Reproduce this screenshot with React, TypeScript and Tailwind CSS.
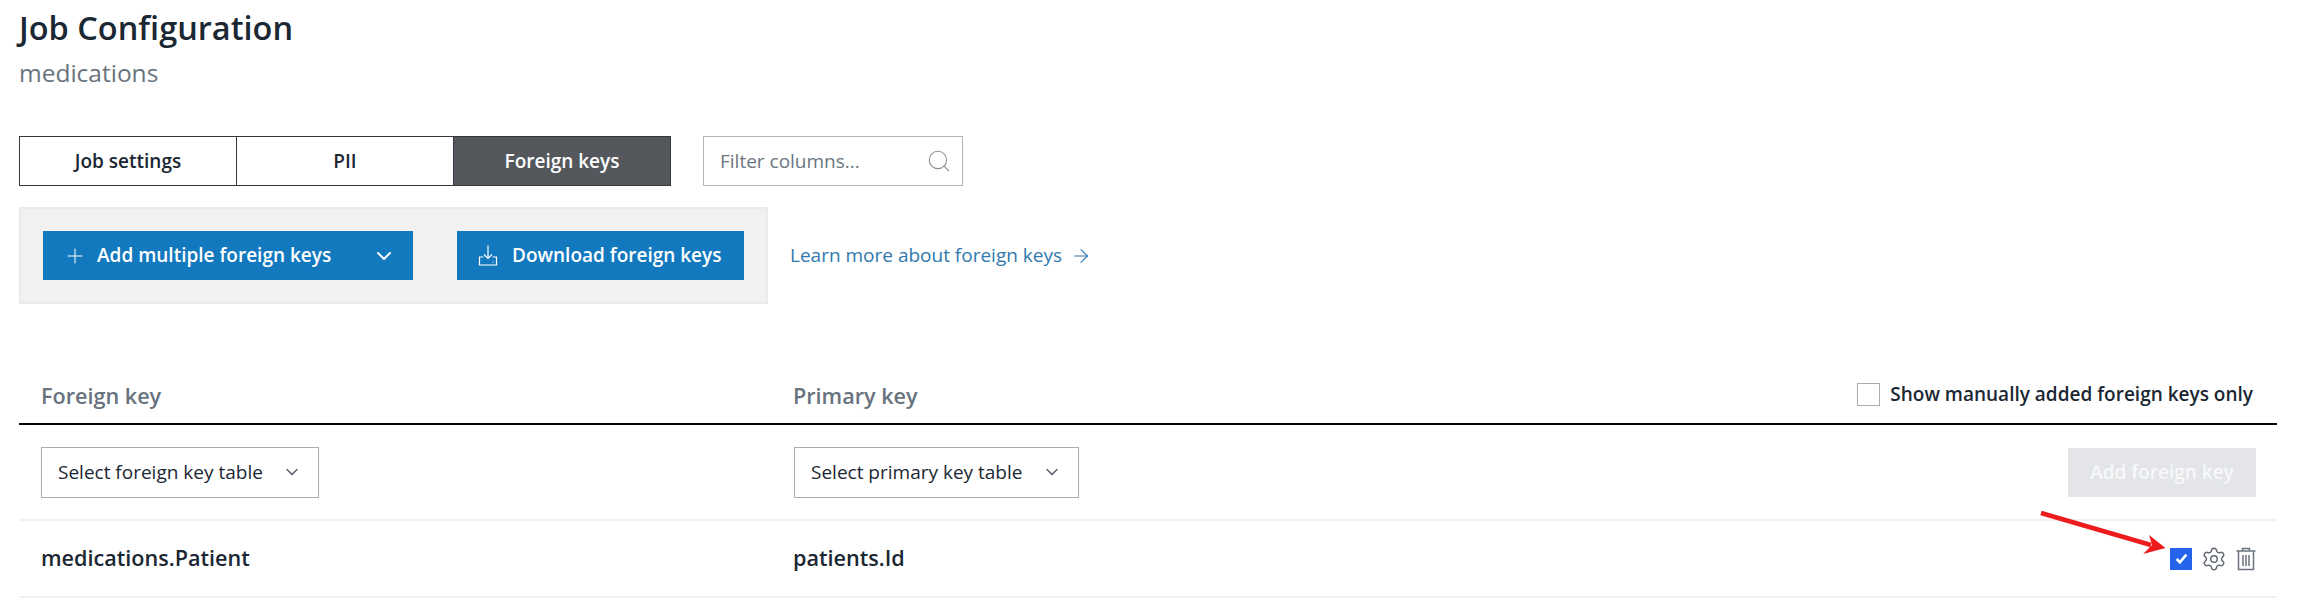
import { ArrowRight, ChevronDown, Plus, Search, Settings } from 'lucide-react';

const TABS = [
  { id: 'job', label: 'Job settings' },
  { id: 'pii', label: 'PII' },
  { id: 'fk', label: 'Foreign keys', active: true },
];

function TrayIcon() {
  return (
    <svg viewBox="0 0 24 24" className="h-6 w-6" fill="none" stroke="currentColor" strokeWidth="1.2">
      <path d="M12 1.5v13M8 10.5l4 4 4-4" />
      <path d="M7.5 13H3.5v8h17v-8h-4" />
      <path d="M16.5 18h1" />
    </svg>
  );
}

function TrashIcon() {
  return (
    <svg viewBox="0 0 20 24" className="h-[24px] w-[20px]" fill="none" stroke="#6b7280" strokeWidth="1.5">
      <path d="M0.5 4h19M6.5 4V1.5h7V4" />
      <path d="M2.5 4v18.5h15V4" />
      <path d="M7 8v11M10 8v11M13 8v11" />
    </svg>
  );
}

function SelectBox({ label, width }: { label: string; width: string }) {
  return (
    <div className={`flex h-[51px] items-center justify-between border-[1.5px] border-[#a9adb3] bg-white pl-4 pr-[16px] text-[19px] text-[#1b2733] ${width}`}>
      <span>{label}</span>
      <ChevronDown className="h-5 w-5 text-[#4b5563]" strokeWidth={1.5} />
    </div>
  );
}

export default function App() {
  return (
    <div className="relative h-[611px] w-[2304px] overflow-hidden bg-white pl-[19px] pr-[27px] font-['Open_Sans',sans-serif]">
      {/* Page header */}
      <h1 className="pt-[5px] text-[32.5px] leading-[45px] font-semibold text-[#1b2733]">Job Configuration</h1>
      <p className="mt-[7px] text-[24.5px] leading-[32px] text-[#68737e]">medications</p>

      {/* Tabs + filter */}
      <div className="mt-[47px] flex items-center gap-8">
        <div className="flex h-[50px] w-[652px] border-[1.5px] border-[#33373b]">
          {TABS.map(({ id, label, active }) => (
            <div
              key={id}
              className={
                active
                  ? 'flex flex-1 items-center justify-center bg-[#54585d] text-[19px] font-semibold text-white'
                  : 'flex flex-1 items-center justify-center border-r-[1.5px] border-[#33373b] bg-white text-[19px] font-semibold text-[#1b2733]'
              }
            >
              {label}
            </div>
          ))}
        </div>
        <div className="flex h-[50px] w-[260px] items-center justify-between border-[1.5px] border-[#b1b5bb] pl-4 pr-[10px] text-[19px] text-[#6b7680]">
          <span>Filter columns...</span>
          <Search className="h-[26px] w-[26px] text-[#8a9199]" strokeWidth={1} />
        </div>
      </div>

      {/* Actions */}
      <div className="mt-[21px] flex items-center">
        <div className="flex h-[97px] w-[749px] items-center gap-[44px] border-2 border-[#e8eaed] bg-[#f1f1f2] pl-[22px]">
          <div className="flex h-[49px] w-[370px] items-center bg-[#1379be] pl-[20px] pr-[17px] text-[19px] font-semibold text-white">
            <Plus className="h-6 w-6" strokeWidth={1} />
            <span className="ml-[10px]">Add multiple foreign keys</span>
            <ChevronDown className="ml-auto h-6 w-6" strokeWidth={2} />
          </div>
          <div className="flex h-[49px] w-[287px] items-center bg-[#1379be] pl-[19px] text-[19px] font-semibold text-white">
            <TrayIcon />
            <span className="ml-[12px]">Download foreign keys</span>
          </div>
        </div>
        <a className="ml-[22px] flex items-center text-[19px] text-[#3179ad]">
          Learn more about foreign keys
          <ArrowRight className="ml-[8px] h-[22px] w-[22px]" strokeWidth={1.2} />
        </a>
      </div>

      {/* Table header */}
      <div className="mt-[71px] flex h-[50px] items-center border-b-2 border-black pb-[6px] pl-[22px]">
        <span className="w-[752px] text-[21.6px] font-semibold text-[#68737e]">Foreign key</span>
        <span className="text-[21.6px] font-semibold text-[#68737e]">Primary key</span>
        <label className="mr-[24px] mb-[4px] ml-auto flex items-center text-[19px] font-semibold text-[#1b2733]">
          <span className="mr-[10px] h-[23px] w-[23px] border-[1.5px] border-[#a9adb3] bg-white" />
          Show manually added foreign keys only
        </label>
      </div>

      {/* New row */}
      <div className="flex h-[96px] items-center border-b-2 border-[#f0f1f3] pl-[22px]">
        <div className="w-[753px]">
          <SelectBox label="Select foreign key table" width="w-[278px]" />
        </div>
        <SelectBox label="Select primary key table" width="w-[285px]" />
        <div className="mr-[21px] ml-auto flex h-[49px] w-[188px] items-center justify-center bg-[#e3e5e8] text-[19px] font-semibold text-[#f7f8f9]">
          Add foreign key
        </div>
      </div>

      {/* Existing row */}
      <div className="flex h-[77px] items-center border-b-2 border-[#f0f1f3] pl-[22px] text-[21.6px] font-semibold text-[#1b2733]">
        <span className="w-[752px]">medications.Patient</span>
        <span>patients.Id</span>
        <div className="mr-[21px] ml-auto flex items-center gap-[9px]">
          <span className="flex h-[22px] w-[22px] items-center justify-center bg-[#2563eb]">
            <svg viewBox="0 0 12 12" className="h-[13px] w-[13px]" fill="none" stroke="white" strokeWidth="2.4">
              <path d="M1.5 6.5l3 3 6-7" />
            </svg>
          </span>
          <Settings className="h-[26px] w-[26px] text-[#5f6670]" strokeWidth={1.3} />
          <TrashIcon />
        </div>
      </div>

      {/* Red annotation arrow */}
      <svg className="absolute top-[508px] left-[2036px] h-[48px] w-[134px]" viewBox="0 0 134 48">
        <path d="M5 5 L115 37" stroke="#ee1c1c" strokeWidth="4.5" fill="none" />
        <path d="M129.5 40 L113 27 L116 37 L107 46 Z" fill="#ee1c1c" />
      </svg>
    </div>
  );
}
